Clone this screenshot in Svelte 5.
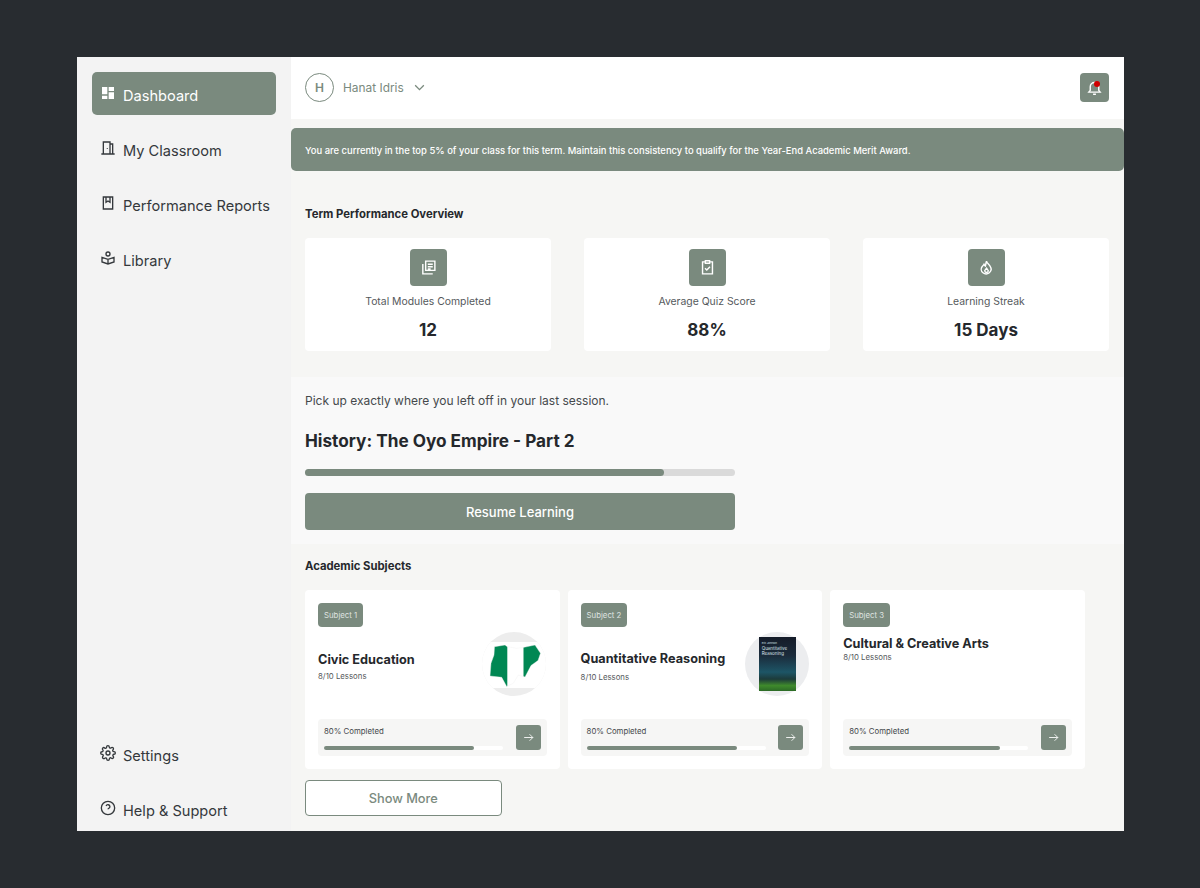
<script>
	const icons = {
		dashboard: '<path fill="currentColor" stroke="none" d="M3 3h8v11H3zM13 3h8v6h-8zM13 11h8v10h-8zM3 16h8v5H3z"/>',
		door: '<path d="M2 21h20M5 21V3h10v18M15 6h4v15M11 12v1"/>',
		report: '<path d="M5 3h14v18H5zM9 3v8l3-2 3 2V3"/>',
		library: '<circle cx="12" cy="6" r="3"/><path d="M3 11l9 3 9-3v7l-9 3-9-3zM12 14v7"/>',
		settings: '<circle cx="12" cy="12" r="3"/><path d="M19.4 15a1.65 1.65 0 0 0 .33 1.82l.06.06a2 2 0 1 1-2.83 2.83l-.06-.06a1.65 1.65 0 0 0-2.82 1.17V21a2 2 0 1 1-4 0v-.09a1.65 1.65 0 0 0-2.82-1.15l-.06.06a2 2 0 1 1-2.83-2.83l.06-.06a1.65 1.65 0 0 0-1.17-2.82H3a2 2 0 1 1 0-4h.09a1.65 1.65 0 0 0 1.15-2.82l-.06-.06a2 2 0 1 1 2.83-2.83l.06.06a1.65 1.65 0 0 0 2.82-1.17V3a2 2 0 1 1 4 0v.09a1.65 1.65 0 0 0 2.82 1.15l.06-.06a2 2 0 1 1 2.83 2.83l-.06.06a1.65 1.65 0 0 0 1.17 2.82H21a2 2 0 1 1 0 4h-.09a1.65 1.65 0 0 0-1.51 1z"/>',
		help: '<circle cx="12" cy="12" r="10"/><path d="M9.1 9a3 3 0 0 1 5.8 1c0 2-2.9 2.5-2.9 4M12 17.5v.1"/>',
		modules: '<path d="M8 3h13v13H8zM4 7v14h14M11 7.5h7M11 11h7M11 14h4"/>',
		quiz: '<path d="M9 4H5v17h14V4h-4M9 2.5h6v3.5H9zM8.5 13l2.5 2.5 4.5-4.5"/>',
		flame: '<path d="M12 3c.5 3 3 4 5 7 2 3 2 7-1 9.5-2.5 2-6.5 2-9 0-3-2.5-3-6.5-1-9 1-1.2 2-2 2.5-3 .5 1 1 2 2 2.5 .5-2 .5-4 1.5-7z"/><path d="M12 13l2.5 3.500a2.500 2.500 0 0 1-5 0z"/>',
		bell: '<path d="M18 16V11a6 6 0 0 0-12 0v5l-2 2.5h16zM10 21.5h4"/>',
		arrow: '<path d="M4 12h16M14 6l6 6-6 6"/>'
	};

	const nav = [
		{ label: "Dashboard", icon: "dashboard", active: true },
		{ label: "My Classroom", icon: "door" },
		{ label: "Performance Reports", icon: "report" },
		{ label: "Library", icon: "library" }
	];

	const navBottom = [
		{ label: "Settings", icon: "settings" },
		{ label: "Help & Support", icon: "help" }
	];

	const stats = [
		{ label: "Total Modules Completed", value: "12", icon: "modules" },
		{ label: "Average Quiz Score", value: "88%", icon: "quiz" },
		{ label: "Learning Streak", value: "15 Days", icon: "flame" }
	];

	const subjects = [
		{ tag: "Subject 1", title: "Civic Education", art: "map" },
		{ tag: "Subject 2", title: "Quantitative Reasoning", art: "book" },
		{ tag: "Subject 3", title: "Cultural & Creative Arts", art: "" }
	];

	const mapOutline = "8,44 9,31.3 12,23 12.5,14.7 23,13 25.3,14.7 34.7,16.3 42,15.3 53,13 58.5,21.3 56,28.5 49,33.5 43,45 36.3,43 31.3,51.3 24.7,54.5 19.7,45.3";
</script>

<div class="frame">
	<aside class="sidebar">
		<nav class="nav-group">
			{#each nav as item}
				<div class="nav-item" class:active={item.active}>
					<svg class="nav-icon" viewBox="0 0 24 24">{@html icons[item.icon]}</svg>
					<span>{item.label}</span>
				</div>
			{/each}
		</nav>
		<nav class="nav-group">
			{#each navBottom as item}
				<div class="nav-item">
					<svg class="nav-icon" viewBox="0 0 24 24">{@html icons[item.icon]}</svg>
					<span>{item.label}</span>
				</div>
			{/each}
		</nav>
	</aside>

	<main class="main">
		<header class="topbar">
			<div class="user">
				<div class="avatar">H</div>
				<span class="user-name">Hanat Idris</span>
				<svg class="chevron" viewBox="0 0 24 24"><path d="M4 8l8 8 8-8"/></svg>
			</div>
			<div class="bell">
				<svg viewBox="0 0 24 24">{@html icons.bell}</svg>
				<span class="bell-dot"></span>
			</div>
		</header>

		<div class="banner">You are currently in the top 5% of your class for this term. Maintain this consistency to qualify for the Year-End Academic Merit Award.</div>

		<section class="overview">
			<h2>Term Performance Overview</h2>
			<div class="stats">
				{#each stats as stat}
					<div class="stat">
						<div class="stat-icon">
							<svg viewBox="0 0 24 24">{@html icons[stat.icon]}</svg>
						</div>
						<div class="stat-label">{stat.label}</div>
						<div class="stat-value">{stat.value}</div>
					</div>
				{/each}
			</div>
		</section>

		<section class="resume">
			<p>Pick up exactly where you left off in your last session.</p>
			<h1>History: The Oyo Empire - Part 2</h1>
			<div class="resume-bar"><div class="resume-fill"></div></div>
			<button class="resume-button">Resume Learning</button>
		</section>

		<section class="subjects">
			<h2>Academic Subjects</h2>
			<div class="subject-row">
				{#each subjects as subject}
					<article class="subject">
						<div class="tag">{subject.tag}</div>
						<div class="subject-head {subject.art || 'plain'}">
							<div class="subject-text">
								<h3>{subject.title}</h3>
								<div class="lessons">8/10 Lessons</div>
							</div>
							{#if subject.art === "map"}
								<svg class="art" viewBox="0 0 64 64">
									<defs>
										<clipPath id="disc"><circle cx="32" cy="32" r="32"/></clipPath>
										<clipPath id="nigeria"><polygon points={mapOutline}/></clipPath>
									</defs>
									<g clip-path="url(#disc)">
										<rect width="64" height="64" fill="#ededed"/>
										<rect y="10" width="64" height="46" fill="#fff"/>
									</g>
									<g clip-path="url(#nigeria)">
										<rect width="25.3" height="64" fill="#008753"/>
										<rect x="41.5" width="23" height="64" fill="#008753"/>
									</g>
									<polygon points={mapOutline} fill="none" stroke="#f1f1f1" stroke-width="0.4"/>
								</svg>
							{:else if subject.art === "book"}
								<div class="art disc">
									<div class="cover">
										<span class="cover-author">Eric Johnson</span>
										<span class="cover-title">Quantitative Reasoning</span>
									</div>
								</div>
							{/if}
						</div>
						<div class="progress">
							<div class="progress-info">
								<div class="progress-label">80% Completed</div>
								<div class="progress-bar"><div class="progress-fill"></div></div>
							</div>
							<div class="progress-go">
								<svg viewBox="0 0 24 24">{@html icons.arrow}</svg>
							</div>
						</div>
					</article>
				{/each}
			</div>
			<button class="show-more">Show More</button>
		</section>
	</main>
</div>

<style>
	:global(body)
	{
		margin: 0;
		background: #282c30;
		font-family: Inter, "Liberation Sans", sans-serif;
		color: #25282c;
	}

	.frame
	{
		display: flex;
		width: 1047px;
		height: 774px;
		margin: 57px 0 57px 77px;
		overflow: hidden;
		background: #f6f6f4;
	}

	.sidebar
	{
		display: flex;
		flex-direction: column;
		justify-content: space-between;
		box-sizing: border-box;
		flex: none;
		width: 214px;
		height: 774px;
		padding: 15px 15px 0;
		background: #f3f3f3;
	}

	.nav-group
	{
		display: flex;
		flex-direction: column;
		gap: 12px;
	}

	.nav-group:last-child
	{
		margin-bottom: 1px;
	}

	.nav-item
	{
		display: flex;
		align-items: center;
		gap: 7px;
		height: 43px;
		padding-left: 8px;
		border-radius: 5px;
		font-size: 14.6px;
		color: #34383c;
	}

	.nav-item span
	{
		margin-top: 4px;
	}

	.nav-item.active
	{
		background: #7a8a7e;
		color: #fff;
	}

	.nav-icon
	{
		flex: none;
		width: 16px;
		height: 16px;
		margin-top: -2px;
		fill: none;
		stroke: currentColor;
		stroke-width: 2;
	}

	.main
	{
		flex: 1;
		min-width: 0;
	}

	.topbar
	{
		display: flex;
		align-items: center;
		justify-content: space-between;
		height: 62px;
		padding: 0 15px 1px 14px;
		box-sizing: border-box;
		background: #fff;
	}

	.user
	{
		display: flex;
		align-items: center;
	}

	.avatar
	{
		display: flex;
		align-items: center;
		justify-content: center;
		box-sizing: border-box;
		width: 29px;
		height: 29px;
		margin-right: 9px;
		border: 1px solid #7a8a7e;
		border-radius: 50%;
		font-size: 12px;
		font-weight: 600;
		color: #7a8a7e;
	}

	.user-name
	{
		font-size: 11.9px;
		color: #7a8a7e;
	}

	.chevron
	{
		width: 13px;
		height: 13px;
		margin-left: 9px;
		fill: none;
		stroke: #7a8a7e;
		stroke-width: 2.4;
	}

	.bell
	{
		position: relative;
		display: flex;
		align-items: center;
		justify-content: center;
		width: 29px;
		height: 29px;
		border-radius: 4px;
		background: #7a8a7e;
	}

	.bell svg
	{
		width: 17px;
		height: 17px;
		fill: none;
		stroke: #fff;
		stroke-width: 2;
	}

	.bell-dot
	{
		position: absolute;
		top: 8px;
		left: 14px;
		width: 6px;
		height: 6px;
		border-radius: 50%;
		background: #d00000;
	}

	.banner
	{
		display: flex;
		align-items: center;
		box-sizing: border-box;
		height: 43px;
		margin-top: 9px;
		padding: 2px 0 0 14px;
		border-radius: 5px;
		background: #7a8a7e;
		font-size: 9.45px;
		font-weight: 500;
		color: #fff;
	}

	h2
	{
		margin: 0;
		font-size: 11.3px;
		font-weight: 700;
		line-height: 14px;
	}

	.overview
	{
		padding: 36px 15px 26px 14px;
	}

	.stats
	{
		display: flex;
		justify-content: space-between;
		margin-top: 17px;
	}

	.stat
	{
		display: flex;
		flex-direction: column;
		align-items: center;
		box-sizing: border-box;
		width: 246px;
		height: 113px;
		padding-top: 11px;
		border-radius: 4px;
		background: #fff;
	}

	.stat-icon
	{
		display: flex;
		align-items: center;
		justify-content: center;
		width: 37px;
		height: 37px;
		border-radius: 4px;
		background: #7a8a7e;
	}

	.stat-icon svg
	{
		width: 17px;
		height: 17px;
		fill: none;
		stroke: #fff;
		stroke-width: 2;
	}

	.stat-label
	{
		margin-top: 9px;
		font-size: 10.4px;
		line-height: 14px;
		color: #55595c;
	}

	.stat-value
	{
		margin-top: 10px;
		font-size: 17px;
		font-weight: 700;
		line-height: 22px;
	}

	.resume
	{
		box-sizing: border-box;
		height: 167px;
		padding: 16px 14px 0;
		background: #f9f9f9;
	}

	.resume p
	{
		margin: 0;
		font-size: 12px;
		line-height: 16px;
		color: #45494c;
	}

	h1
	{
		margin: 20px 0 0;
		font-size: 17.2px;
		font-weight: 700;
		line-height: 24px;
	}

	.resume-bar
	{
		width: 430px;
		height: 7px;
		margin-top: 16px;
		border-radius: 4px;
		background: #dadada;
	}

	.resume-fill
	{
		width: 359px;
		height: 7px;
		border-radius: 4px;
		background: #7a8a7e;
	}

	.resume-button
	{
		display: block;
		width: 430px;
		height: 37px;
		margin-top: 17px;
		padding: 0;
		border: none;
		border-radius: 4px;
		background: #7a8a7e;
		font: 500 13px Inter, "Liberation Sans", sans-serif;
		color: #fff;
	}

	.subjects
	{
		padding: 15px 14px 0;
	}

	.subject-row
	{
		display: flex;
		gap: 8px;
		margin-top: 17px;
	}

	.subject
	{
		display: flex;
		flex-direction: column;
		box-sizing: border-box;
		width: 254.6px;
		height: 179px;
		padding: 13px;
		border-radius: 4px;
		background: #fff;
	}

	.tag
	{
		align-self: flex-start;
		padding: 0 6px;
		border-radius: 4px;
		background: #7a8a7e;
		font-size: 7.8px;
		line-height: 24px;
		color: #dfe3e0;
	}

	.subject-head
	{
		display: flex;
		align-items: center;
		justify-content: space-between;
		height: 64px;
		margin-top: 5px;
	}

	.subject-text
	{
		padding-top: 4px;
	}

	.subject-head.plain
	{
		align-items: flex-start;
		box-sizing: border-box;
	}

	h3
	{
		margin: 0;
		font-size: 12.7px;
		font-weight: 700;
		line-height: 16px;
	}

	.lessons
	{
		margin-top: 3px;
		font-size: 7.8px;
		line-height: 10px;
		color: #55595c;
	}

	.plain .lessons
	{
		margin-top: 0;
	}

	.book .lessons
	{
		margin-top: 5px;
	}

	.art
	{
		flex: none;
		width: 64px;
		height: 64px;
	}

	.map .art
	{
		margin-right: 1px;
	}

	.disc
	{
		display: flex;
		align-items: center;
		justify-content: center;
		border-radius: 50%;
		background: #ecedef;
	}

	.cover
	{
		box-sizing: border-box;
		width: 37px;
		height: 54px;
		padding: 4px 3px 0;
		background: linear-gradient(#141b28 0%, #1b2c3c 35%, #1d5566 65%, #1c3a3a 78%, #3f8a2c 90%, #2c6a26 100%);
		color: #d8e2e8;
	}

	.cover-author
	{
		display: block;
		font-size: 2.5px;
		line-height: 5px;
	}

	.cover-title
	{
		display: block;
		font-size: 4.5px;
		line-height: 5px;
	}

	.progress
	{
		display: flex;
		align-items: flex-end;
		justify-content: space-between;
		box-sizing: border-box;
		height: 37px;
		margin-top: auto;
		padding: 6px;
		border-radius: 4px;
		background: #f6f6f5;
	}

	.progress-info
	{
		width: 179px;
	}

	.progress-label
	{
		font-size: 7.8px;
		line-height: 12px;
		color: #44484b;
	}

	.progress-bar
	{
		height: 4px;
		margin-top: 9px;
		border-radius: 2px;
		background: #fff;
	}

	.progress-fill
	{
		width: 84%;
		height: 4px;
		border-radius: 2px;
		background: #7a8a7e;
	}

	.progress-go
	{
		display: flex;
		align-items: center;
		justify-content: center;
		width: 25px;
		height: 25px;
		border-radius: 3px;
		background: #7a8a7e;
	}

	.progress-go svg
	{
		width: 13px;
		height: 13px;
		fill: none;
		stroke: #fff;
		stroke-width: 1.6;
	}

	.show-more
	{
		display: block;
		width: 196.5px;
		height: 36px;
		margin-top: 11px;
		padding: 0;
		border: 1px solid #7a8a7e;
		border-radius: 4px;
		background: #fff;
		font: 500 12.8px Inter, "Liberation Sans", sans-serif;
		color: #7a8a7e;
	}
</style>
